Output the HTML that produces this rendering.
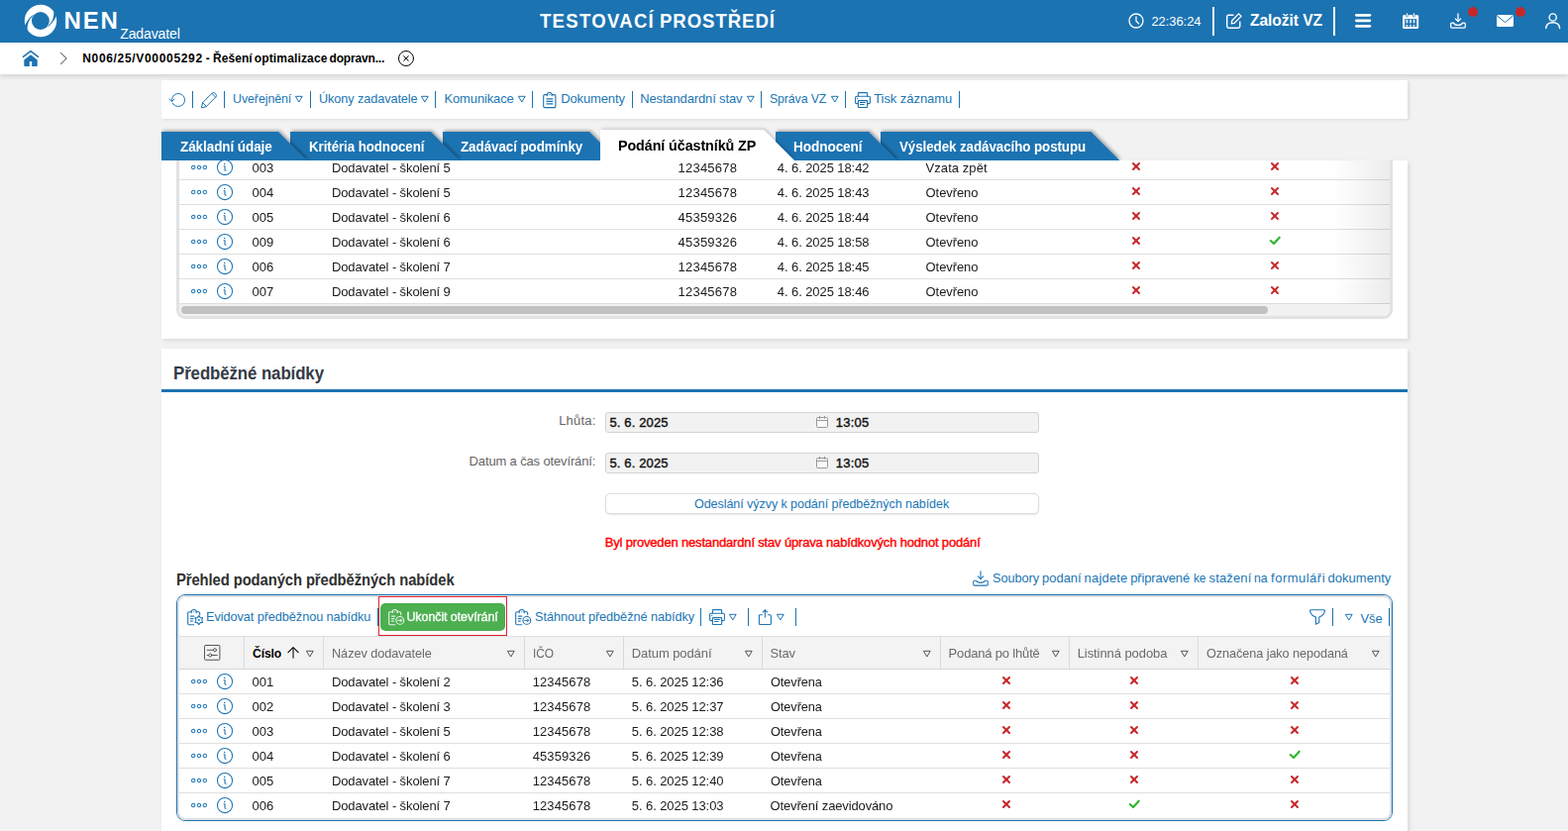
<!DOCTYPE html>
<html lang="cs">
<head>
<meta charset="utf-8">
<title>NEN - Zadavatel</title>
<style>
html,body{margin:0;padding:0}
body{width:1583px;height:839px;overflow:hidden;position:relative;background:#f2f2f2;font-family:"Liberation Sans",sans-serif;font-size:13px;color:#000}
.t{position:absolute;white-space:pre;line-height:20px;height:20px}
.a{position:absolute}
svg{position:absolute;overflow:visible}
.gl{position:absolute;will-change:transform}
.gi{position:absolute;width:0;height:0}

</style>
</head>
<body>
<div class="a" style="left:0px;top:0px;width:1583px;height:43px;background:#1c73b2"></div>
<svg style="left:24px;top:3.9px" width="34" height="34" viewBox="-17 -17 34 34"><circle cx="0" cy="0" r="16.2" fill="#fff"/><circle cx="-0.1" cy="0" r="8.95" fill="#1c73b2"/><path d="M-17.2,6.6 L-16.1,5.2 C-14.9,2.2 -11.8,-3.0 -7.7,-6.0 L-7.3,-5.3 C-10.8,-2.3 -13.6,1.8 -13.3,9.2 L-14.2,10.5 Z" fill="#1c73b2"/><path d="M-17.2,6.6 L-16.1,5.2 C-14.9,2.2 -11.8,-3.0 -7.7,-6.0 L-7.3,-5.3 C-10.8,-2.3 -13.6,1.8 -13.3,9.2 L-14.2,10.5 Z" fill="#1c73b2" transform="rotate(180)"/></svg>
<span class="t" style="left:64.48px;top:10.5px;font-size:24px;font-weight:700;color:#fff;letter-spacing:1.894px;">NEN</span>
<span class="t" style="left:121.23px;top:23.5px;font-size:14px;color:#fff;letter-spacing:-0.116px;">Zadavatel</span>
<span class="t" style="left:544.78px;top:11px;font-size:20px;font-weight:700;transform:scaleX(0.93);transform-origin:0 50%;color:#fff;letter-spacing:1.35px;">TESTOVACÍ </span>
<span class="t" style="left:665.78px;top:11px;font-size:20px;font-weight:700;transform:scaleX(0.93);transform-origin:0 50%;color:#fff;letter-spacing:1.002px;">PROSTŘEDÍ</span>
<svg style="left:1137.7px;top:11.9px" width="18" height="18" viewBox="-9 -9 18 18"><circle cx="0" cy="0" r="7" fill="none" stroke="#fff" stroke-width="1.3" stroke-linecap="round" stroke-linejoin="round" /><path d="M0,-4 V0.2 L2.6,2.8" fill="none" stroke="#fff" stroke-width="1.3" stroke-linecap="round" stroke-linejoin="round" /></svg>
<span class="t" style="left:1162.38px;top:12px;font-size:13px;color:#fff;letter-spacing:-0.063px;">22:36:24</span>
<div class="a" style="left:1224px;top:7px;width:2px;height:29px;background:#fff"></div>
<svg style="left:1238.2px;top:13px" width="16" height="16" viewBox="0 0 16 16"><path d="M7,2.2 H2.4 Q0.7,2.2 0.7,3.9 V13.6 Q0.7,15.3 2.4,15.3 H12.1 Q13.8,15.3 13.8,13.6 V9" fill="none" stroke="#fff" stroke-width="1.4" stroke-linecap="round" stroke-linejoin="round" /><path d="M12.6,0.9 L15.1,3.4 L8.2,10.3 L5.3,10.8 L5.8,7.8 Z" fill="none" stroke="#fff" stroke-width="1.3" stroke-linecap="round" stroke-linejoin="round" /></svg>
<span class="t" style="left:1261.64px;top:10.6px;font-size:16px;font-weight:700;transform:scaleX(0.9759);transform-origin:0 50%;color:#fff;letter-spacing:-0.084px;">Založit VZ</span>
<div class="a" style="left:1346px;top:7px;width:2px;height:29px;background:#fff"></div>
<svg style="left:1368px;top:14.2px" width="16.2" height="14" viewBox="0 0 16.2 14"><rect x="0" y="0" width="16.2" height="2.7" rx="1.35" fill="#fff"/><rect x="0" y="5.5" width="16.2" height="2.7" rx="1.35" fill="#fff"/><rect x="0" y="11" width="16.2" height="2.7" rx="1.35" fill="#fff"/></svg>
<svg style="left:1415.7px;top:13.1px" width="16.2" height="16" viewBox="0 0 16.2 16"><rect x="0" y="2" width="16.2" height="14" rx="1.6" fill="#fff"/><rect x="3.5" y="0" width="1.9" height="4" rx="0.9" fill="#fff" stroke="#1c73b2" stroke-width="0.7"/><rect x="10.5" y="0" width="1.9" height="4" rx="0.9" fill="#fff" stroke="#1c73b2" stroke-width="0.7"/><rect x="2.2" y="6.1" width="12" height="8" fill="#1c73b2"/><rect x="3.5" y="6.8" width="1.9" height="3.6" fill="#fff" opacity=".8"/><rect x="3.5" y="12" width="1.9" height="1.7" fill="#fff" opacity=".85"/><rect x="7.1" y="6.8" width="1.9" height="3.6" fill="#fff" opacity=".8"/><rect x="7.1" y="12" width="1.9" height="1.7" fill="#fff" opacity=".85"/><rect x="10.6" y="6.8" width="1.9" height="3.6" fill="#fff" opacity=".8"/><rect x="10.6" y="12" width="1.9" height="1.7" fill="#fff" opacity=".85"/></svg>
<svg style="left:1463.8px;top:13px" width="16" height="16" viewBox="0 0 16 16"><path d="M8,0.8 V8.4" fill="none" stroke="#fff" stroke-width="1.3" stroke-linecap="round" stroke-linejoin="round" /><path d="M5.3,5.9 L8,8.6 L10.7,5.9" fill="none" stroke="#fff" stroke-width="1.3" stroke-linecap="round" stroke-linejoin="round" /><path d="M1.8,10.2 Q0.7,10.2 0.7,11.3 V14 Q0.7,15.1 1.8,15.1 H14.2 Q15.3,15.1 15.3,14 V11.3 Q15.3,10.2 14.2,10.2 H12.3 Q11.6,12.4 8,12.4 Q4.4,12.4 3.7,10.2 Z" fill="none" stroke="#fff" stroke-width="1.3" stroke-linecap="round" stroke-linejoin="round" /></svg>
<div class="a" style="left:1482px;top:6.9px;width:10px;height:10px;border-radius:50%;background:#c62828"></div>
<svg style="left:1511px;top:15px" width="17" height="12" viewBox="0 0 17 12"><rect x="0" y="0" width="17" height="12" rx="1.6" fill="#fff"/><path d="M0.8,1.2 L8.5,7.6 L16.2,1.2" fill="none" stroke="#1c73b2" stroke-width="1" stroke-linecap="round" stroke-linejoin="round" /></svg>
<div class="a" style="left:1530px;top:6.9px;width:10px;height:10px;border-radius:50%;background:#c62828"></div>
<svg style="left:1560px;top:13px" width="15.4" height="16" viewBox="0 0 15.4 16"><circle cx="7.7" cy="4.5" r="3.6" fill="none" stroke="#fff" stroke-width="1.4" stroke-linecap="round" stroke-linejoin="round" /><path d="M0.8,15.6 Q1,9.7 7.7,9.7 Q14.4,9.7 14.6,15.6" fill="none" stroke="#fff" stroke-width="1.4" stroke-linecap="round" stroke-linejoin="round" /></svg>
<div class="a" style="left:0px;top:43px;width:1583px;height:32px;background:#fff;box-shadow:0 2px 5px rgba(0,0,0,.14)"></div>
<svg style="left:23.2px;top:50.9px" width="16" height="16" viewBox="0 0 16 16"><path d="M0.4,6.4 L8,0.6 L15.6,6.4" fill="none" stroke="#1c73b2" stroke-width="1.5" stroke-linecap="round" stroke-linejoin="round" /><path d="M8,4.2 L14.7,9.5 V15.2 Q14.7,16 13.9,16 H9.2 V11 H6.8 V16 H2.1 Q1.3,16 1.3,15.2 V9.5 Z" fill="#1c73b2"/></svg>
<svg style="left:60.5px;top:53.1px" width="7" height="12" viewBox="0 0 7 12"><path d="M0.5,0.3 L6.2,6 L0.5,11.7" fill="none" stroke="#444" stroke-width="1" stroke-linecap="round" stroke-linejoin="round" /></svg>
<span class="t" style="left:83.24px;top:49px;font-size:12px;font-weight:700;letter-spacing:0.673px;">N006/25/V00005292 </span>
<span class="t" style="left:207.84px;top:49px;font-size:12px;font-weight:700;">- </span>
<span class="t" style="left:215.04px;top:49px;font-size:12px;font-weight:700;letter-spacing:0.064px;">Řešení </span>
<span class="t" style="left:256.74px;top:49px;font-size:12px;font-weight:700;letter-spacing:0.15px;">optimalizace </span>
<span class="t" style="left:332.54px;top:49px;font-size:12px;font-weight:700;letter-spacing:-0.174px;">dopravn...</span>
<svg style="left:400.5px;top:50px" width="18" height="18" viewBox="-9 -9 18 18"><circle cx="0" cy="0" r="7.5" fill="none" stroke="#000" stroke-width="1" stroke-linecap="round" stroke-linejoin="round" /><path d="M-2.3,-2.3 L2.3,2.3" fill="none" stroke="#000" stroke-width="1" stroke-linecap="round" stroke-linejoin="round" /><path d="M2.3,-2.3 L-2.3,2.3" fill="none" stroke="#000" stroke-width="1" stroke-linecap="round" stroke-linejoin="round" /></svg>
<div class="a" style="left:163px;top:81px;width:1258px;height:39px;background:#fff;box-shadow:2px 1px 3px rgba(0,0,0,.09)"></div>
<svg style="left:171px;top:92px" width="18" height="18" viewBox="-9 -9 18 18"><path d="M-6.49,0.34 A6.5,6.5 0 1 1 -5.74,3.05" fill="none" stroke="#1c73b2" stroke-width="1" stroke-linecap="round" stroke-linejoin="round" /><path d="M-8.8,-1.0 L-6.5,1.6 L-4.1,-0.9" fill="none" stroke="#1c73b2" stroke-width="1" stroke-linecap="round" stroke-linejoin="round" /></svg>
<div class="a" style="left:194px;top:92px;width:1px;height:17px;background:#1c73b2"></div>
<svg style="left:203.2px;top:93.1px" width="16" height="16" viewBox="0 0 16 16"><path d="M0.5,15.5 L1.6,10.6 L11.3,0.9 Q12.6,-0.2 14.1,1.2 L14.8,1.9 Q16.1,3.4 15.1,4.7 L5.4,14.4 Z" fill="none" stroke="#1c73b2" stroke-width="1" stroke-linecap="round" stroke-linejoin="round" /><path d="M1.6,10.6 L5.4,14.4" fill="none" stroke="#1c73b2" stroke-width="1" stroke-linecap="round" stroke-linejoin="round" /><path d="M10.9,1.4 L14.6,5.1" fill="none" stroke="#1c73b2" stroke-width="1" stroke-linecap="round" stroke-linejoin="round" /></svg>
<div class="a" style="left:226px;top:92px;width:1px;height:17px;background:#1c73b2"></div>
<span class="t" style="left:234.52px;top:90.3px;font-size:13px;transform:scaleX(0.9552);transform-origin:0 50%;color:#2176b5;letter-spacing:-0.086px;">Uveřejnění</span>
<svg style="left:296.8px;top:95px" width="10" height="10" viewBox="-5 -5 10 10"><path d="M-3.2,-2.7 H3.2 L0,2.7 Z" fill="none" stroke="#1c73b2" stroke-width="1" stroke-linecap="round" stroke-linejoin="round" /></svg>
<div class="a" style="left:313px;top:92px;width:1px;height:17px;background:#1c73b2"></div>
<span class="t" style="left:321.6px;top:90.3px;font-size:13px;transform:scaleX(0.9758);transform-origin:0 50%;color:#2176b5;letter-spacing:-0.082px;">Úkony zadavatele</span>
<svg style="left:423.8px;top:95px" width="10" height="10" viewBox="-5 -5 10 10"><path d="M-3.2,-2.7 H3.2 L0,2.7 Z" fill="none" stroke="#1c73b2" stroke-width="1" stroke-linecap="round" stroke-linejoin="round" /></svg>
<div class="a" style="left:439px;top:92px;width:1px;height:17px;background:#1c73b2"></div>
<span class="t" style="left:448.49px;top:90.3px;font-size:13px;color:#2176b5;letter-spacing:-0.142px;">Komunikace</span>
<svg style="left:521.8px;top:95px" width="10" height="10" viewBox="-5 -5 10 10"><path d="M-3.2,-2.7 H3.2 L0,2.7 Z" fill="none" stroke="#1c73b2" stroke-width="1" stroke-linecap="round" stroke-linejoin="round" /></svg>
<div class="a" style="left:537px;top:92px;width:1px;height:17px;background:#1c73b2"></div>
<svg style="left:547.8px;top:93px" width="14" height="16" viewBox="0 0 14 16"><path d="M4.4,2.6 H2 Q0.7,2.6 0.7,3.9 V14.3 Q0.7,15.6 2,15.6 H11.6 Q12.9,15.6 12.9,14.3 V3.9 Q12.9,2.6 11.6,2.6 H9.2" fill="none" stroke="#1c73b2" stroke-width="1.1" stroke-linecap="round" stroke-linejoin="round" /><path d="M4.4,3.6 V2.6 Q4.4,0.5 6.8,0.5 Q9.2,0.5 9.2,2.6 V3.6" fill="none" stroke="#1c73b2" stroke-width="1.1" stroke-linecap="round" stroke-linejoin="round" /><circle cx="6.8" cy="2.6" r="0.6" fill="#1c73b2"/><path d="M3.9,6.9 H9.9" fill="none" stroke="#1c73b2" stroke-width="1.1" stroke-linecap="round" stroke-linejoin="round" /><path d="M3.9,9.4 H9.9" fill="none" stroke="#1c73b2" stroke-width="1.1" stroke-linecap="round" stroke-linejoin="round" /><path d="M3.9,11.9 H9.9" fill="none" stroke="#1c73b2" stroke-width="1.1" stroke-linecap="round" stroke-linejoin="round" /></svg>
<span class="t" style="left:566.18px;top:90.3px;font-size:13px;color:#2176b5;letter-spacing:-0.123px;">Dokumenty</span>
<div class="a" style="left:638px;top:92px;width:1px;height:17px;background:#1c73b2"></div>
<span class="t" style="left:646.18px;top:90.3px;font-size:13px;color:#2176b5;letter-spacing:-0.134px;">Nestandardní stav</span>
<svg style="left:752.6px;top:95px" width="10" height="10" viewBox="-5 -5 10 10"><path d="M-3.2,-2.7 H3.2 L0,2.7 Z" fill="none" stroke="#1c73b2" stroke-width="1" stroke-linecap="round" stroke-linejoin="round" /></svg>
<div class="a" style="left:768px;top:92px;width:1px;height:17px;background:#1c73b2"></div>
<span class="t" style="left:777.13px;top:90.3px;font-size:13px;transform:scaleX(0.9439);transform-origin:0 50%;color:#2176b5;letter-spacing:-0.089px;">Správa VZ</span>
<svg style="left:837.5px;top:95px" width="10" height="10" viewBox="-5 -5 10 10"><path d="M-3.2,-2.7 H3.2 L0,2.7 Z" fill="none" stroke="#1c73b2" stroke-width="1" stroke-linecap="round" stroke-linejoin="round" /></svg>
<div class="a" style="left:853px;top:92px;width:1px;height:17px;background:#1c73b2"></div>
<svg style="left:862.8px;top:93px" width="16" height="16" viewBox="0 0 16 16"><path d="M3.4,4.3 V1.2 Q3.4,0.6 4,0.6 H12 Q12.6,0.6 12.6,1.2 V4.3" fill="none" stroke="#1c73b2" stroke-width="1.1" stroke-linecap="round" stroke-linejoin="round" /><path d="M3.4,11.6 H1.8 Q0.6,11.6 0.6,10.4 V5.5 Q0.6,4.3 1.8,4.3 H14.2 Q15.4,4.3 15.4,5.5 V10.4 Q15.4,11.6 14.2,11.6 H12.6" fill="none" stroke="#1c73b2" stroke-width="1.1" stroke-linecap="round" stroke-linejoin="round" /><rect x="3.4" y="8.6" width="9.2" height="6.9" rx="0.5" fill="none" stroke="#1c73b2" stroke-width="1.1" stroke-linecap="round" stroke-linejoin="round" /><path d="M5.4,10.5 H10.4" fill="none" stroke="#1c73b2" stroke-width="1" stroke-linecap="round" stroke-linejoin="round" /><path d="M5.4,12.5 H9.2" fill="none" stroke="#1c73b2" stroke-width="1" stroke-linecap="round" stroke-linejoin="round" /><circle cx="2.7" cy="6.4" r="0.6" fill="#1c73b2"/></svg>
<span class="t" style="left:882.18px;top:90.3px;font-size:13px;color:#2176b5;letter-spacing:-0.059px;">Tisk záznamu</span>
<div class="a" style="left:968px;top:92px;width:1px;height:17px;background:#1c73b2"></div>
<div class="a" style="left:163px;top:162px;width:1258px;height:180px;background:#fff;box-shadow:2px 2px 4px rgba(0,0,0,.10)"></div>
<div class="a" style="left:178px;top:162px;width:1228px;height:160px;box-sizing:border-box;border:3px solid #e0e2e4;border-top:0;border-radius:0 0 9px 9px;background:#fff"></div>
<div class="gl" style="left:181px;top:162px;width:1222px;height:145px"><div class="gi" style="left:-181px;top:-162px">
<div class="a" style="left:181px;top:181px;width:1222px;height:1px;background:#dfdfdf"></div>
<svg style="left:192.1px;top:166px" width="18" height="6" viewBox="-9 -3 18 6"><circle cx="-5.8" cy="0" r="1.7" fill="none" stroke="#1c73b2" stroke-width="1.05" stroke-linecap="round" stroke-linejoin="round" /><circle cx="0" cy="0" r="1.7" fill="none" stroke="#1c73b2" stroke-width="1.05" stroke-linecap="round" stroke-linejoin="round" /><circle cx="5.8" cy="0" r="1.7" fill="none" stroke="#1c73b2" stroke-width="1.05" stroke-linecap="round" stroke-linejoin="round" /></svg>
<svg style="left:218px;top:160px" width="18" height="18" viewBox="-9 -9 18 18"><circle cx="0" cy="0" r="7.6" fill="none" stroke="#1c73b2" stroke-width="1.05" stroke-linecap="round" stroke-linejoin="round" /><circle cx="-0.3" cy="-3.5" r="0.8" fill="#1c73b2"/><path d="M-0.9,-1.3 H0 V2.6 Q0,3.3 1,3.3" fill="none" stroke="#1c73b2" stroke-width="1.1" stroke-linecap="round" stroke-linejoin="round" /></svg>
<span class="t" style="left:254.59px;top:159.5px;font-size:13px;color:#1b1b1b;letter-spacing:-0.067px;">003</span>
<span class="t" style="left:334.89px;top:159.5px;font-size:13px;color:#1b1b1b;letter-spacing:-0.113px;">Dodavatel - školení 5</span>
<span class="t" style="left:684.58px;top:159.5px;font-size:13px;color:#1b1b1b;letter-spacing:0.218px;">12345678</span>
<span class="t" style="left:784.78px;top:159.5px;font-size:13px;color:#1b1b1b;letter-spacing:-0.081px;">4. 6. 2025 18:42</span>
<span class="t" style="left:934.58px;top:159.5px;font-size:13px;color:#1b1b1b;letter-spacing:0.059px;">Vzata zpět</span>
<svg style="left:1142.4px;top:163px" width="10" height="10" viewBox="-5 -5 10 10"><line x1="-3" y1="-3" x2="3" y2="3" stroke="#c8272b" stroke-width="2" stroke-linecap="round"/><line x1="3" y1="-3" x2="-3" y2="3" stroke="#c8272b" stroke-width="2" stroke-linecap="round"/></svg>
<svg style="left:1282.4px;top:163px" width="10" height="10" viewBox="-5 -5 10 10"><line x1="-3" y1="-3" x2="3" y2="3" stroke="#c8272b" stroke-width="2" stroke-linecap="round"/><line x1="3" y1="-3" x2="-3" y2="3" stroke="#c8272b" stroke-width="2" stroke-linecap="round"/></svg>
<div class="a" style="left:181px;top:206px;width:1222px;height:1px;background:#dfdfdf"></div>
<svg style="left:192.1px;top:191px" width="18" height="6" viewBox="-9 -3 18 6"><circle cx="-5.8" cy="0" r="1.7" fill="none" stroke="#1c73b2" stroke-width="1.05" stroke-linecap="round" stroke-linejoin="round" /><circle cx="0" cy="0" r="1.7" fill="none" stroke="#1c73b2" stroke-width="1.05" stroke-linecap="round" stroke-linejoin="round" /><circle cx="5.8" cy="0" r="1.7" fill="none" stroke="#1c73b2" stroke-width="1.05" stroke-linecap="round" stroke-linejoin="round" /></svg>
<svg style="left:218px;top:185px" width="18" height="18" viewBox="-9 -9 18 18"><circle cx="0" cy="0" r="7.6" fill="none" stroke="#1c73b2" stroke-width="1.05" stroke-linecap="round" stroke-linejoin="round" /><circle cx="-0.3" cy="-3.5" r="0.8" fill="#1c73b2"/><path d="M-0.9,-1.3 H0 V2.6 Q0,3.3 1,3.3" fill="none" stroke="#1c73b2" stroke-width="1.1" stroke-linecap="round" stroke-linejoin="round" /></svg>
<span class="t" style="left:254.59px;top:184.5px;font-size:13px;color:#1b1b1b;letter-spacing:-0.067px;">004</span>
<span class="t" style="left:334.89px;top:184.5px;font-size:13px;color:#1b1b1b;letter-spacing:-0.113px;">Dodavatel - školení 5</span>
<span class="t" style="left:684.58px;top:184.5px;font-size:13px;color:#1b1b1b;letter-spacing:0.218px;">12345678</span>
<span class="t" style="left:784.78px;top:184.5px;font-size:13px;color:#1b1b1b;letter-spacing:-0.081px;">4. 6. 2025 18:43</span>
<span class="t" style="left:934.58px;top:184.5px;font-size:13px;color:#1b1b1b;letter-spacing:-0.088px;">Otevřeno</span>
<svg style="left:1142.4px;top:188px" width="10" height="10" viewBox="-5 -5 10 10"><line x1="-3" y1="-3" x2="3" y2="3" stroke="#c8272b" stroke-width="2" stroke-linecap="round"/><line x1="3" y1="-3" x2="-3" y2="3" stroke="#c8272b" stroke-width="2" stroke-linecap="round"/></svg>
<svg style="left:1282.4px;top:188px" width="10" height="10" viewBox="-5 -5 10 10"><line x1="-3" y1="-3" x2="3" y2="3" stroke="#c8272b" stroke-width="2" stroke-linecap="round"/><line x1="3" y1="-3" x2="-3" y2="3" stroke="#c8272b" stroke-width="2" stroke-linecap="round"/></svg>
<div class="a" style="left:181px;top:231px;width:1222px;height:1px;background:#dfdfdf"></div>
<svg style="left:192.1px;top:216px" width="18" height="6" viewBox="-9 -3 18 6"><circle cx="-5.8" cy="0" r="1.7" fill="none" stroke="#1c73b2" stroke-width="1.05" stroke-linecap="round" stroke-linejoin="round" /><circle cx="0" cy="0" r="1.7" fill="none" stroke="#1c73b2" stroke-width="1.05" stroke-linecap="round" stroke-linejoin="round" /><circle cx="5.8" cy="0" r="1.7" fill="none" stroke="#1c73b2" stroke-width="1.05" stroke-linecap="round" stroke-linejoin="round" /></svg>
<svg style="left:218px;top:210px" width="18" height="18" viewBox="-9 -9 18 18"><circle cx="0" cy="0" r="7.6" fill="none" stroke="#1c73b2" stroke-width="1.05" stroke-linecap="round" stroke-linejoin="round" /><circle cx="-0.3" cy="-3.5" r="0.8" fill="#1c73b2"/><path d="M-0.9,-1.3 H0 V2.6 Q0,3.3 1,3.3" fill="none" stroke="#1c73b2" stroke-width="1.1" stroke-linecap="round" stroke-linejoin="round" /></svg>
<span class="t" style="left:254.59px;top:209.5px;font-size:13px;color:#1b1b1b;letter-spacing:-0.067px;">005</span>
<span class="t" style="left:334.89px;top:209.5px;font-size:13px;color:#1b1b1b;letter-spacing:-0.113px;">Dodavatel - školení 6</span>
<span class="t" style="left:684.58px;top:209.5px;font-size:13px;color:#1b1b1b;letter-spacing:0.218px;">45359326</span>
<span class="t" style="left:784.78px;top:209.5px;font-size:13px;color:#1b1b1b;letter-spacing:-0.081px;">4. 6. 2025 18:44</span>
<span class="t" style="left:934.58px;top:209.5px;font-size:13px;color:#1b1b1b;letter-spacing:-0.088px;">Otevřeno</span>
<svg style="left:1142.4px;top:213px" width="10" height="10" viewBox="-5 -5 10 10"><line x1="-3" y1="-3" x2="3" y2="3" stroke="#c8272b" stroke-width="2" stroke-linecap="round"/><line x1="3" y1="-3" x2="-3" y2="3" stroke="#c8272b" stroke-width="2" stroke-linecap="round"/></svg>
<svg style="left:1282.4px;top:213px" width="10" height="10" viewBox="-5 -5 10 10"><line x1="-3" y1="-3" x2="3" y2="3" stroke="#c8272b" stroke-width="2" stroke-linecap="round"/><line x1="3" y1="-3" x2="-3" y2="3" stroke="#c8272b" stroke-width="2" stroke-linecap="round"/></svg>
<div class="a" style="left:181px;top:256px;width:1222px;height:1px;background:#dfdfdf"></div>
<svg style="left:192.1px;top:241px" width="18" height="6" viewBox="-9 -3 18 6"><circle cx="-5.8" cy="0" r="1.7" fill="none" stroke="#1c73b2" stroke-width="1.05" stroke-linecap="round" stroke-linejoin="round" /><circle cx="0" cy="0" r="1.7" fill="none" stroke="#1c73b2" stroke-width="1.05" stroke-linecap="round" stroke-linejoin="round" /><circle cx="5.8" cy="0" r="1.7" fill="none" stroke="#1c73b2" stroke-width="1.05" stroke-linecap="round" stroke-linejoin="round" /></svg>
<svg style="left:218px;top:235px" width="18" height="18" viewBox="-9 -9 18 18"><circle cx="0" cy="0" r="7.6" fill="none" stroke="#1c73b2" stroke-width="1.05" stroke-linecap="round" stroke-linejoin="round" /><circle cx="-0.3" cy="-3.5" r="0.8" fill="#1c73b2"/><path d="M-0.9,-1.3 H0 V2.6 Q0,3.3 1,3.3" fill="none" stroke="#1c73b2" stroke-width="1.1" stroke-linecap="round" stroke-linejoin="round" /></svg>
<span class="t" style="left:254.59px;top:234.5px;font-size:13px;color:#1b1b1b;letter-spacing:-0.067px;">009</span>
<span class="t" style="left:334.89px;top:234.5px;font-size:13px;color:#1b1b1b;letter-spacing:-0.113px;">Dodavatel - školení 6</span>
<span class="t" style="left:684.58px;top:234.5px;font-size:13px;color:#1b1b1b;letter-spacing:0.218px;">45359326</span>
<span class="t" style="left:784.78px;top:234.5px;font-size:13px;color:#1b1b1b;letter-spacing:-0.081px;">4. 6. 2025 18:58</span>
<span class="t" style="left:934.58px;top:234.5px;font-size:13px;color:#1b1b1b;letter-spacing:-0.088px;">Otevřeno</span>
<svg style="left:1142.4px;top:238px" width="10" height="10" viewBox="-5 -5 10 10"><line x1="-3" y1="-3" x2="3" y2="3" stroke="#c8272b" stroke-width="2" stroke-linecap="round"/><line x1="3" y1="-3" x2="-3" y2="3" stroke="#c8272b" stroke-width="2" stroke-linecap="round"/></svg>
<svg style="left:1281.4px;top:237px" width="12" height="12" viewBox="-6 -6 12 12"><path d="M-4.2,0.0 L-1.0,3.0 L4.7,-3.3" fill="none" stroke="#2db52d" stroke-width="2.1" stroke-linecap="round" stroke-linejoin="round" /></svg>
<div class="a" style="left:181px;top:281px;width:1222px;height:1px;background:#dfdfdf"></div>
<svg style="left:192.1px;top:266px" width="18" height="6" viewBox="-9 -3 18 6"><circle cx="-5.8" cy="0" r="1.7" fill="none" stroke="#1c73b2" stroke-width="1.05" stroke-linecap="round" stroke-linejoin="round" /><circle cx="0" cy="0" r="1.7" fill="none" stroke="#1c73b2" stroke-width="1.05" stroke-linecap="round" stroke-linejoin="round" /><circle cx="5.8" cy="0" r="1.7" fill="none" stroke="#1c73b2" stroke-width="1.05" stroke-linecap="round" stroke-linejoin="round" /></svg>
<svg style="left:218px;top:260px" width="18" height="18" viewBox="-9 -9 18 18"><circle cx="0" cy="0" r="7.6" fill="none" stroke="#1c73b2" stroke-width="1.05" stroke-linecap="round" stroke-linejoin="round" /><circle cx="-0.3" cy="-3.5" r="0.8" fill="#1c73b2"/><path d="M-0.9,-1.3 H0 V2.6 Q0,3.3 1,3.3" fill="none" stroke="#1c73b2" stroke-width="1.1" stroke-linecap="round" stroke-linejoin="round" /></svg>
<span class="t" style="left:254.59px;top:259.5px;font-size:13px;color:#1b1b1b;letter-spacing:-0.067px;">006</span>
<span class="t" style="left:334.89px;top:259.5px;font-size:13px;color:#1b1b1b;letter-spacing:-0.113px;">Dodavatel - školení 7</span>
<span class="t" style="left:684.58px;top:259.5px;font-size:13px;color:#1b1b1b;letter-spacing:0.218px;">12345678</span>
<span class="t" style="left:784.78px;top:259.5px;font-size:13px;color:#1b1b1b;letter-spacing:-0.081px;">4. 6. 2025 18:45</span>
<span class="t" style="left:934.58px;top:259.5px;font-size:13px;color:#1b1b1b;letter-spacing:-0.088px;">Otevřeno</span>
<svg style="left:1142.4px;top:263px" width="10" height="10" viewBox="-5 -5 10 10"><line x1="-3" y1="-3" x2="3" y2="3" stroke="#c8272b" stroke-width="2" stroke-linecap="round"/><line x1="3" y1="-3" x2="-3" y2="3" stroke="#c8272b" stroke-width="2" stroke-linecap="round"/></svg>
<svg style="left:1282.4px;top:263px" width="10" height="10" viewBox="-5 -5 10 10"><line x1="-3" y1="-3" x2="3" y2="3" stroke="#c8272b" stroke-width="2" stroke-linecap="round"/><line x1="3" y1="-3" x2="-3" y2="3" stroke="#c8272b" stroke-width="2" stroke-linecap="round"/></svg>
<div class="a" style="left:181px;top:306px;width:1222px;height:1px;background:#dfdfdf"></div>
<svg style="left:192.1px;top:291px" width="18" height="6" viewBox="-9 -3 18 6"><circle cx="-5.8" cy="0" r="1.7" fill="none" stroke="#1c73b2" stroke-width="1.05" stroke-linecap="round" stroke-linejoin="round" /><circle cx="0" cy="0" r="1.7" fill="none" stroke="#1c73b2" stroke-width="1.05" stroke-linecap="round" stroke-linejoin="round" /><circle cx="5.8" cy="0" r="1.7" fill="none" stroke="#1c73b2" stroke-width="1.05" stroke-linecap="round" stroke-linejoin="round" /></svg>
<svg style="left:218px;top:285px" width="18" height="18" viewBox="-9 -9 18 18"><circle cx="0" cy="0" r="7.6" fill="none" stroke="#1c73b2" stroke-width="1.05" stroke-linecap="round" stroke-linejoin="round" /><circle cx="-0.3" cy="-3.5" r="0.8" fill="#1c73b2"/><path d="M-0.9,-1.3 H0 V2.6 Q0,3.3 1,3.3" fill="none" stroke="#1c73b2" stroke-width="1.1" stroke-linecap="round" stroke-linejoin="round" /></svg>
<span class="t" style="left:254.59px;top:284.5px;font-size:13px;color:#1b1b1b;letter-spacing:-0.067px;">007</span>
<span class="t" style="left:334.89px;top:284.5px;font-size:13px;color:#1b1b1b;letter-spacing:-0.113px;">Dodavatel - školení 9</span>
<span class="t" style="left:684.58px;top:284.5px;font-size:13px;color:#1b1b1b;letter-spacing:0.218px;">12345678</span>
<span class="t" style="left:784.78px;top:284.5px;font-size:13px;color:#1b1b1b;letter-spacing:-0.081px;">4. 6. 2025 18:46</span>
<span class="t" style="left:934.58px;top:284.5px;font-size:13px;color:#1b1b1b;letter-spacing:-0.088px;">Otevřeno</span>
<svg style="left:1142.4px;top:288px" width="10" height="10" viewBox="-5 -5 10 10"><line x1="-3" y1="-3" x2="3" y2="3" stroke="#c8272b" stroke-width="2" stroke-linecap="round"/><line x1="3" y1="-3" x2="-3" y2="3" stroke="#c8272b" stroke-width="2" stroke-linecap="round"/></svg>
<svg style="left:1282.4px;top:288px" width="10" height="10" viewBox="-5 -5 10 10"><line x1="-3" y1="-3" x2="3" y2="3" stroke="#c8272b" stroke-width="2" stroke-linecap="round"/><line x1="3" y1="-3" x2="-3" y2="3" stroke="#c8272b" stroke-width="2" stroke-linecap="round"/></svg>
</div></div>
<div class="a" style="left:1345px;top:162px;width:58px;height:145px;background:linear-gradient(90deg,rgba(0,0,0,0),rgba(0,0,0,.075))"></div>
<div class="a" style="left:181px;top:307px;width:1222px;height:12px;background:#f1f1f1;border-radius:0 0 6px 6px"></div>
<div class="a" style="left:183px;top:309px;width:1097px;height:8px;background:#c1c1c1;border-radius:4px"></div>
<svg style="left:0;top:120px" width="1583" height="42" viewBox="0 120 1583 42"><defs><filter id="ts" x="-5%" y="-40%" width="110%" height="180%"><feDropShadow dx="1.5" dy="-1.5" stdDeviation="1.5" flood-color="#000" flood-opacity=".30"/></filter><filter id="tw" x="-5%" y="-40%" width="110%" height="180%"><feDropShadow dx="1.5" dy="-1.5" stdDeviation="1.5" flood-color="#000" flood-opacity=".15"/></filter><clipPath id="tc"><rect x="0" y="120" width="1583" height="42"/></clipPath></defs><g clip-path="url(#tc)"><g filter="url(#ts)"><polygon points="889,133 1101.5,133 1130.5,162 889,162" fill="#1c73b2"/></g><g filter="url(#ts)"><polygon points="783,133 877,133 906,162 783,162" fill="#1c73b2"/></g><g filter="url(#ts)"><polygon points="447,133 595,133 624,162 447,162" fill="#1c73b2"/></g><g filter="url(#ts)"><polygon points="293,133 435,133 464,162 293,162" fill="#1c73b2"/></g><g filter="url(#ts)"><polygon points="163,133 281,133 310,162 163,162" fill="#1c73b2"/></g><g filter="url(#tw)"><polygon points="606,131 771,131 802,162 606,162" fill="#fff"/></g></g></svg>
<span class="t" style="left:181.56px;top:138.2px;font-size:14px;font-weight:700;transform:scaleX(0.9652);transform-origin:0 50%;color:#fff;letter-spacing:-0.084px;">Základní údaje</span>
<span class="t" style="left:311.97px;top:138.2px;font-size:14px;font-weight:700;transform:scaleX(0.952);transform-origin:0 50%;color:#fff;letter-spacing:-0.083px;">Kritéria hodnocení</span>
<span class="t" style="left:465.36px;top:138.2px;font-size:14px;font-weight:700;transform:scaleX(0.9588);transform-origin:0 50%;color:#fff;letter-spacing:-0.083px;">Zadávací podmínky</span>
<span class="t" style="left:623.91px;top:137.2px;font-size:15px;font-weight:700;transform:scaleX(0.9539);transform-origin:0 50%;letter-spacing:-0.084px;">Podání účastníků ZP</span>
<span class="t" style="left:801.35px;top:138.2px;font-size:14px;font-weight:700;transform:scaleX(0.9715);transform-origin:0 50%;color:#fff;letter-spacing:-0.085px;">Hodnocení</span>
<span class="t" style="left:907.76px;top:138.2px;font-size:14px;font-weight:700;transform:scaleX(0.9552);transform-origin:0 50%;color:#fff;letter-spacing:-0.082px;">Výsledek zadávacího postupu</span>
<div class="a" style="left:163px;top:352px;width:1258px;height:500px;background:#fff;box-shadow:2px 2px 4px rgba(0,0,0,.10)"></div>
<span class="t" style="left:174.77px;top:367px;font-size:18px;font-weight:700;transform:scaleX(0.9345);transform-origin:0 50%;color:#333a45;letter-spacing:-0.087px;">Předběžné nabídky</span>
<div class="a" style="left:163px;top:393px;width:1258px;height:3px;background:#1c73b2"></div>
<span class="t" style="left:564.18px;top:415px;font-size:13px;color:#666;letter-spacing:0.203px;">Lhůta:</span>
<div class="a" style="left:611px;top:416px;width:438px;height:21px;box-sizing:border-box;border:1px solid #d3d3d3;border-radius:3px;background:#f2f2f2"></div>
<span class="t" style="left:615.49px;top:416.7px;font-size:13px;-webkit-text-stroke:.4px;color:#111;letter-spacing:0.138px;">5. 6. 2025</span>
<svg style="left:823.5px;top:420.2px" width="12" height="12" viewBox="0 0 12 12"><rect x="0.5" y="1.5" width="11" height="10" rx="1" fill="rgba(255,255,255,.55)" stroke="#999" stroke-width="1"/><path d="M0.5,4.5 H11.5" fill="none" stroke="#999" stroke-width="1" stroke-linecap="round" stroke-linejoin="round" /><path d="M3.5,0.3 V2.5" fill="none" stroke="#999" stroke-width="1" stroke-linecap="round" stroke-linejoin="round" /><path d="M8.5,0.3 V2.5" fill="none" stroke="#999" stroke-width="1" stroke-linecap="round" stroke-linejoin="round" /></svg>
<span class="t" style="left:843.68px;top:416.7px;font-size:13px;-webkit-text-stroke:.4px;color:#111;letter-spacing:0.256px;">13:05</span>
<span class="t" style="left:473.59px;top:455.6px;font-size:13px;color:#666;letter-spacing:-0.143px;">Datum a čas otevírání:</span>
<div class="a" style="left:611px;top:457px;width:438px;height:21px;box-sizing:border-box;border:1px solid #d3d3d3;border-radius:3px;background:#f2f2f2"></div>
<span class="t" style="left:615.49px;top:457.7px;font-size:13px;-webkit-text-stroke:.4px;color:#111;letter-spacing:0.138px;">5. 6. 2025</span>
<svg style="left:823.5px;top:461.2px" width="12" height="12" viewBox="0 0 12 12"><rect x="0.5" y="1.5" width="11" height="10" rx="1" fill="rgba(255,255,255,.55)" stroke="#999" stroke-width="1"/><path d="M0.5,4.5 H11.5" fill="none" stroke="#999" stroke-width="1" stroke-linecap="round" stroke-linejoin="round" /><path d="M3.5,0.3 V2.5" fill="none" stroke="#999" stroke-width="1" stroke-linecap="round" stroke-linejoin="round" /><path d="M8.5,0.3 V2.5" fill="none" stroke="#999" stroke-width="1" stroke-linecap="round" stroke-linejoin="round" /></svg>
<span class="t" style="left:843.68px;top:457.7px;font-size:13px;-webkit-text-stroke:.4px;color:#111;letter-spacing:0.256px;">13:05</span>
<div class="a" style="left:611px;top:498px;width:438px;height:21px;box-sizing:border-box;border:1px solid #dcdcdc;border-radius:5px;background:#fff;box-shadow:0 1px 2px rgba(0,0,0,.10)"></div>
<span class="t" style="left:701.31px;top:498.6px;font-size:13px;transform:scaleX(0.9664);transform-origin:0 50%;color:#2176b5;letter-spacing:-0.081px;">Odeslání výzvy k podání předběžných nabídek</span>
<span class="t" style="left:610.68px;top:537.6px;font-size:13px;-webkit-text-stroke:.4px;color:#ff0000;letter-spacing:-0.169px;">Byl proveden nestandardní stav úprava nabídkových hodnot podání</span>
<span class="t" style="left:177.99px;top:575.5px;font-size:16px;font-weight:700;transform:scaleX(0.9237);transform-origin:0 50%;color:#2f2f2f;letter-spacing:-0.084px;">Přehled podaných předběžných nabídek</span>
<svg style="left:982.2px;top:575.8px" width="16" height="16" viewBox="0 0 16 16"><path d="M8,0.8 V8.4" fill="none" stroke="#2176b5" stroke-width="1.1" stroke-linecap="round" stroke-linejoin="round" /><path d="M5.3,5.9 L8,8.6 L10.7,5.9" fill="none" stroke="#2176b5" stroke-width="1.1" stroke-linecap="round" stroke-linejoin="round" /><path d="M1.8,10.2 Q0.7,10.2 0.7,11.3 V14 Q0.7,15.1 1.8,15.1 H14.2 Q15.3,15.1 15.3,14 V11.3 Q15.3,10.2 14.2,10.2 H12.3 Q11.6,12.4 8,12.4 Q4.4,12.4 3.7,10.2 Z" fill="none" stroke="#2176b5" stroke-width="1.1" stroke-linecap="round" stroke-linejoin="round" /></svg>
<span class="t" style="left:1001.5px;top:573.6px;font-size:13px;transform:scaleX(0.9818);transform-origin:0 50%;color:#2176b5;letter-spacing:-0.084px;">Soubory </span>
<span class="t" style="left:1052.09px;top:573.6px;font-size:13px;color:#2176b5;letter-spacing:-0.039px;">podaní </span>
<span class="t" style="left:1094.59px;top:573.6px;font-size:13px;color:#2176b5;letter-spacing:0.186px;">najdete </span>
<span class="t" style="left:1141.29px;top:573.6px;font-size:13px;color:#2176b5;letter-spacing:-0.174px;">připravené </span>
<span class="t" style="left:1204.94px;top:573.6px;font-size:13px;transform:scaleX(0.9206);transform-origin:0 50%;color:#2176b5;letter-spacing:-0.181px;">ke </span>
<span class="t" style="left:1220.49px;top:573.6px;font-size:13px;color:#2176b5;letter-spacing:0.158px;">stažení </span>
<span class="t" style="left:1266.42px;top:573.6px;font-size:13px;transform:scaleX(0.95);transform-origin:0 50%;color:#2176b5;letter-spacing:-0.141px;">na </span>
<span class="t" style="left:1283.09px;top:573.6px;font-size:13px;color:#2176b5;letter-spacing:0.486px;">formuláři </span>
<span class="t" style="left:1340.59px;top:573.6px;font-size:13px;color:#2176b5;letter-spacing:0.01px;">dokumenty</span>
<div class="a" style="left:178px;top:600px;width:1228px;height:229px;box-sizing:border-box;border:1px solid #1c73b2;border-radius:9px;background:#fff"></div>
<div class="a" style="left:179px;top:601px;width:1226px;height:227px;box-sizing:border-box;border:2px solid #dfe0e1;border-radius:8px"></div>
<svg style="left:189px;top:614.9px" width="16" height="16" viewBox="0 0 16 16"><path d="M4.2,2.8 H1.9 Q0.7,2.8 0.7,4 V14.5 Q0.7,15.7 1.9,15.7 H6.8" fill="none" stroke="#2176b5" stroke-width="1.1" stroke-linecap="round" stroke-linejoin="round" /><path d="M9.2,2.8 H11.5 Q12.7,2.8 12.7,4 V5.7" fill="none" stroke="#2176b5" stroke-width="1.1" stroke-linecap="round" stroke-linejoin="round" /><path d="M4.2,3.7 V2.6 Q4.2,0.5 6.7,0.5 Q9.2,0.5 9.2,2.6 V3.7" fill="none" stroke="#2176b5" stroke-width="1.1" stroke-linecap="round" stroke-linejoin="round" /><circle cx="6.7" cy="2.8" r="0.55" fill="#2176b5"/><path d="M3.4,7.1 H6.9" fill="none" stroke="#2176b5" stroke-width="1.1" stroke-linecap="round" stroke-linejoin="round" /><path d="M3.4,9.6 H6" fill="none" stroke="#2176b5" stroke-width="1.1" stroke-linecap="round" stroke-linejoin="round" /><path d="M3.4,12.1 H5.4" fill="none" stroke="#2176b5" stroke-width="1.1" stroke-linecap="round" stroke-linejoin="round" /><polygon points="11.80,6.60 13.25,8.59 15.70,8.85 14.70,11.10 15.70,13.35 13.25,13.61 11.80,15.60 10.35,13.61 7.90,13.35 8.90,11.10 7.90,8.85 10.35,8.59" fill="none" stroke="#2176b5" stroke-width="1.1" stroke-linecap="round" stroke-linejoin="round" /><circle cx="11.8" cy="11.1" r="1" fill="#2176b5"/></svg>
<span class="t" style="left:208.3px;top:612.6px;font-size:13px;transform:scaleX(0.9796);transform-origin:0 50%;color:#2176b5;letter-spacing:-0.081px;">Evidovat předběžnou nabídku</span>
<div class="a" style="left:381px;top:614px;width:1px;height:18px;background:#1c73b2"></div>
<div class="a" style="left:382px;top:602px;width:130px;height:40px;box-sizing:border-box;border:1px solid #e3212f;background:#fff"></div>
<div class="a" style="left:384px;top:609px;width:126px;height:27.5px;background:#4caf50;border-radius:5px"></div>
<div class="gl" style="left:386px;top:611px;width:122px;height:23px"><div class="gi" style="left:-386px;top:-611px">
<svg style="left:391.6px;top:614.9px" width="16" height="16" viewBox="0 0 16 16"><path d="M4.2,2.8 H1.9 Q0.7,2.8 0.7,4 V14.5 Q0.7,15.7 1.9,15.7 H6.8" fill="none" stroke="rgba(255,255,255,.88)" stroke-width="1.1" stroke-linecap="round" stroke-linejoin="round" /><path d="M9.2,2.8 H11.5 Q12.7,2.8 12.7,4 V5.7" fill="none" stroke="rgba(255,255,255,.88)" stroke-width="1.1" stroke-linecap="round" stroke-linejoin="round" /><path d="M4.2,3.7 V2.6 Q4.2,0.5 6.7,0.5 Q9.2,0.5 9.2,2.6 V3.7" fill="none" stroke="rgba(255,255,255,.88)" stroke-width="1.1" stroke-linecap="round" stroke-linejoin="round" /><circle cx="6.7" cy="2.8" r="0.55" fill="rgba(255,255,255,.88)"/><path d="M3.4,7.1 H6.9" fill="none" stroke="rgba(255,255,255,.88)" stroke-width="1.1" stroke-linecap="round" stroke-linejoin="round" /><path d="M3.4,9.6 H6" fill="none" stroke="rgba(255,255,255,.88)" stroke-width="1.1" stroke-linecap="round" stroke-linejoin="round" /><path d="M3.4,12.1 H5.4" fill="none" stroke="rgba(255,255,255,.88)" stroke-width="1.1" stroke-linecap="round" stroke-linejoin="round" /><circle cx="11.8" cy="11.4" r="3.9" fill="none" stroke="rgba(255,255,255,.88)" stroke-width="1.1" stroke-linecap="round" stroke-linejoin="round" /><path d="M9.7,11.4 H13.6" fill="none" stroke="rgba(255,255,255,.88)" stroke-width="1" stroke-linecap="round" stroke-linejoin="round" /><path d="M12.3,9.9 L13.8,11.4 L12.3,12.9" fill="none" stroke="rgba(255,255,255,.88)" stroke-width="1" stroke-linecap="round" stroke-linejoin="round" /></svg>
<span class="t" style="left:410.41px;top:612.6px;font-size:12.5px;-webkit-text-stroke:.4px;color:rgba(255,255,255,.93);letter-spacing:-0.086px;">Ukončit otevírání</span>
</div></div>
<svg style="left:520.2px;top:614.9px" width="16" height="16" viewBox="0 0 16 16"><path d="M4.2,2.8 H1.9 Q0.7,2.8 0.7,4 V14.5 Q0.7,15.7 1.9,15.7 H6.8" fill="none" stroke="#2176b5" stroke-width="1.1" stroke-linecap="round" stroke-linejoin="round" /><path d="M9.2,2.8 H11.5 Q12.7,2.8 12.7,4 V5.7" fill="none" stroke="#2176b5" stroke-width="1.1" stroke-linecap="round" stroke-linejoin="round" /><path d="M4.2,3.7 V2.6 Q4.2,0.5 6.7,0.5 Q9.2,0.5 9.2,2.6 V3.7" fill="none" stroke="#2176b5" stroke-width="1.1" stroke-linecap="round" stroke-linejoin="round" /><circle cx="6.7" cy="2.8" r="0.55" fill="#2176b5"/><path d="M3.4,7.1 H6.9" fill="none" stroke="#2176b5" stroke-width="1.1" stroke-linecap="round" stroke-linejoin="round" /><path d="M3.4,9.6 H6" fill="none" stroke="#2176b5" stroke-width="1.1" stroke-linecap="round" stroke-linejoin="round" /><path d="M3.4,12.1 H5.4" fill="none" stroke="#2176b5" stroke-width="1.1" stroke-linecap="round" stroke-linejoin="round" /><circle cx="11.8" cy="11.4" r="3.9" fill="none" stroke="#2176b5" stroke-width="1.1" stroke-linecap="round" stroke-linejoin="round" /><path d="M9.7,11.4 H13.6" fill="none" stroke="#2176b5" stroke-width="1" stroke-linecap="round" stroke-linejoin="round" /><path d="M12.3,9.9 L13.8,11.4 L12.3,12.9" fill="none" stroke="#2176b5" stroke-width="1" stroke-linecap="round" stroke-linejoin="round" /></svg>
<span class="t" style="left:539.6px;top:612.6px;font-size:13px;transform:scaleX(0.9812);transform-origin:0 50%;color:#2176b5;letter-spacing:-0.081px;">Stáhnout předběžné nabídky</span>
<div class="a" style="left:707px;top:614px;width:1px;height:18px;background:#1c73b2"></div>
<svg style="left:716.2px;top:614.8px" width="16" height="16" viewBox="0 0 16 16"><path d="M3.4,4.3 V1.2 Q3.4,0.6 4,0.6 H12 Q12.6,0.6 12.6,1.2 V4.3" fill="none" stroke="#2176b5" stroke-width="1.1" stroke-linecap="round" stroke-linejoin="round" /><path d="M3.4,11.6 H1.8 Q0.6,11.6 0.6,10.4 V5.5 Q0.6,4.3 1.8,4.3 H14.2 Q15.4,4.3 15.4,5.5 V10.4 Q15.4,11.6 14.2,11.6 H12.6" fill="none" stroke="#2176b5" stroke-width="1.1" stroke-linecap="round" stroke-linejoin="round" /><rect x="3.4" y="8.6" width="9.2" height="6.9" rx="0.5" fill="none" stroke="#2176b5" stroke-width="1.1" stroke-linecap="round" stroke-linejoin="round" /><path d="M5.4,10.5 H10.4" fill="none" stroke="#2176b5" stroke-width="1" stroke-linecap="round" stroke-linejoin="round" /><path d="M5.4,12.5 H9.2" fill="none" stroke="#2176b5" stroke-width="1" stroke-linecap="round" stroke-linejoin="round" /><circle cx="2.7" cy="6.4" r="0.6" fill="#2176b5"/></svg>
<svg style="left:734.8px;top:618px" width="10" height="10" viewBox="-5 -5 10 10"><path d="M-3.2,-2.7 H3.2 L0,2.7 Z" fill="none" stroke="#2176b5" stroke-width="1" stroke-linecap="round" stroke-linejoin="round" /></svg>
<div class="a" style="left:755px;top:614px;width:1px;height:18px;background:#1c73b2"></div>
<svg style="left:765.4px;top:614.8px" width="14" height="16" viewBox="0 0 14 16"><path d="M4.4,5.7 H2.4 Q1.4,5.7 1.4,6.7 V14.5 Q1.4,15.5 2.4,15.5 H12.4 Q13.4,15.5 13.4,14.5 V6.7 Q13.4,5.7 12.4,5.7 H10.4" fill="none" stroke="#2176b5" stroke-width="1.1" stroke-linecap="round" stroke-linejoin="round" /><path d="M7.4,8 V1" fill="none" stroke="#2176b5" stroke-width="1.1" stroke-linecap="round" stroke-linejoin="round" /><path d="M5.3,3 L7.4,0.8 L9.5,3" fill="none" stroke="#2176b5" stroke-width="1.1" stroke-linecap="round" stroke-linejoin="round" /></svg>
<svg style="left:782.8px;top:618px" width="10" height="10" viewBox="-5 -5 10 10"><path d="M-3.2,-2.7 H3.2 L0,2.7 Z" fill="none" stroke="#2176b5" stroke-width="1" stroke-linecap="round" stroke-linejoin="round" /></svg>
<div class="a" style="left:803px;top:614px;width:1px;height:18px;background:#1c73b2"></div>
<svg style="left:1322px;top:615px" width="16" height="16" viewBox="0 0 16 16"><path d="M1.3,0.8 H14.7 Q15.6,0.8 15.5,1.7 Q14.6,6.6 9.8,8.1 V13.4 L6.4,15.2 V8.1 Q1.4,6.6 0.5,1.7 Q0.4,0.8 1.3,0.8 Z" fill="none" stroke="#2176b5" stroke-width="1.1" stroke-linecap="round" stroke-linejoin="round" /></svg>
<div class="a" style="left:1345px;top:614px;width:1px;height:18px;background:#1c73b2"></div>
<svg style="left:1356.7px;top:618.1px" width="10" height="10" viewBox="-5 -5 10 10"><path d="M-3.2,-2.7 H3.2 L0,2.7 Z" fill="none" stroke="#2176b5" stroke-width="1" stroke-linecap="round" stroke-linejoin="round" /></svg>
<span class="t" style="left:1373.38px;top:615.3px;font-size:13px;color:#2176b5;letter-spacing:-0.018px;">Vše</span>
<div class="a" style="left:1402px;top:614px;width:1px;height:18px;background:#1c73b2"></div>
<div class="a" style="left:181px;top:642px;width:1222px;height:34px;box-sizing:border-box;background:#f3f3f3;border-top:1px solid #dfdfdf;border-bottom:1px solid #d6d6d6"></div>
<div class="a" style="left:246px;top:643px;width:1px;height:32px;background:#dadada"></div>
<div class="a" style="left:326px;top:643px;width:1px;height:32px;background:#dadada"></div>
<div class="a" style="left:529px;top:643px;width:1px;height:32px;background:#dadada"></div>
<div class="a" style="left:629px;top:643px;width:1px;height:32px;background:#dadada"></div>
<div class="a" style="left:769px;top:643px;width:1px;height:32px;background:#dadada"></div>
<div class="a" style="left:949px;top:643px;width:1px;height:32px;background:#dadada"></div>
<div class="a" style="left:1079px;top:643px;width:1px;height:32px;background:#dadada"></div>
<div class="a" style="left:1209px;top:643px;width:1px;height:32px;background:#dadada"></div>
<svg style="left:205.8px;top:651.2px" width="16.4" height="15.8" viewBox="0 0 16.4 15.8"><rect x="0.5" y="0.5" width="15.4" height="14.8" rx="0.9" fill="none" stroke="#555" stroke-width="1" stroke-linecap="round" stroke-linejoin="round" /><path d="M3.2,5.3 H9.4" fill="none" stroke="#555" stroke-width="1" stroke-linecap="round" stroke-linejoin="round" /><path d="M3.2,10.5 H4.5" fill="none" stroke="#555" stroke-width="1" stroke-linecap="round" stroke-linejoin="round" /><path d="M7.9,10.5 H13.2" fill="none" stroke="#555" stroke-width="1" stroke-linecap="round" stroke-linejoin="round" /><circle cx="11" cy="5.3" r="1.55" fill="none" stroke="#555" stroke-width="1" stroke-linecap="round" stroke-linejoin="round" /><circle cx="6.3" cy="10.5" r="1.55" fill="none" stroke="#555" stroke-width="1" stroke-linecap="round" stroke-linejoin="round" /></svg>
<span class="t" style="left:254.63px;top:649.8px;font-size:13px;font-weight:700;transform:scaleX(0.9331);transform-origin:0 50%;letter-spacing:-0.101px;">Číslo</span>
<svg style="left:289.8px;top:653.2px" width="12" height="12" viewBox="0 0 12 12"><path d="M6,11.2 V0.9" fill="none" stroke="#000" stroke-width="1.05" stroke-linecap="round" stroke-linejoin="round" /><path d="M0.9,5.7 L6,0.7 L11.1,5.7" fill="none" stroke="#000" stroke-width="1.05" stroke-linecap="round" stroke-linejoin="round" /></svg>
<div class="gl" style="left:327px;top:643px;width:1076px;height:32px"><div class="gi" style="left:-327px;top:-643px">
<svg style="left:307.8px;top:654.6px" width="10" height="10" viewBox="-5 -5 10 10"><path d="M-3.2,-2.7 H3.2 L0,2.7 Z" fill="none" stroke="#555" stroke-width="1" stroke-linecap="round" stroke-linejoin="round" /></svg>
<span class="t" style="left:334.8px;top:649.8px;font-size:13px;transform:scaleX(0.9805);transform-origin:0 50%;color:#6a6a6a;letter-spacing:-0.082px;">Název dodavatele</span>
<svg style="left:511px;top:654.6px" width="10" height="10" viewBox="-5 -5 10 10"><path d="M-3.2,-2.7 H3.2 L0,2.7 Z" fill="none" stroke="#555" stroke-width="1" stroke-linecap="round" stroke-linejoin="round" /></svg>
<span class="t" style="left:537.74px;top:649.8px;font-size:13px;transform:scaleX(0.9175);transform-origin:0 50%;color:#6a6a6a;letter-spacing:-0.133px;">IČO</span>
<svg style="left:611px;top:654.6px" width="10" height="10" viewBox="-5 -5 10 10"><path d="M-3.2,-2.7 H3.2 L0,2.7 Z" fill="none" stroke="#555" stroke-width="1" stroke-linecap="round" stroke-linejoin="round" /></svg>
<span class="t" style="left:637.78px;top:649.8px;font-size:13px;color:#6a6a6a;letter-spacing:-0.082px;">Datum podání</span>
<svg style="left:751px;top:654.6px" width="10" height="10" viewBox="-5 -5 10 10"><path d="M-3.2,-2.7 H3.2 L0,2.7 Z" fill="none" stroke="#555" stroke-width="1" stroke-linecap="round" stroke-linejoin="round" /></svg>
<span class="t" style="left:777.49px;top:649.8px;font-size:13px;color:#6a6a6a;letter-spacing:-0.149px;">Stav</span>
<svg style="left:931px;top:654.6px" width="10" height="10" viewBox="-5 -5 10 10"><path d="M-3.2,-2.7 H3.2 L0,2.7 Z" fill="none" stroke="#555" stroke-width="1" stroke-linecap="round" stroke-linejoin="round" /></svg>
<span class="t" style="left:957.58px;top:649.8px;font-size:13px;color:#6a6a6a;letter-spacing:-0.174px;">Podaná po lhůtě</span>
<svg style="left:1061px;top:654.6px" width="10" height="10" viewBox="-5 -5 10 10"><path d="M-3.2,-2.7 H3.2 L0,2.7 Z" fill="none" stroke="#555" stroke-width="1" stroke-linecap="round" stroke-linejoin="round" /></svg>
<span class="t" style="left:1087.69px;top:649.8px;font-size:13px;color:#6a6a6a;letter-spacing:-0.074px;">Listinná podoba</span>
<svg style="left:1191px;top:654.6px" width="10" height="10" viewBox="-5 -5 10 10"><path d="M-3.2,-2.7 H3.2 L0,2.7 Z" fill="none" stroke="#555" stroke-width="1" stroke-linecap="round" stroke-linejoin="round" /></svg>
<span class="t" style="left:1217.6px;top:649.8px;font-size:13px;transform:scaleX(0.9759);transform-origin:0 50%;color:#6a6a6a;letter-spacing:-0.082px;">Označena jako nepodaná</span>
<svg style="left:1384px;top:654.6px" width="10" height="10" viewBox="-5 -5 10 10"><path d="M-3.2,-2.7 H3.2 L0,2.7 Z" fill="none" stroke="#555" stroke-width="1" stroke-linecap="round" stroke-linejoin="round" /></svg>
</div></div>
<div class="gl" style="left:181px;top:676px;width:1222px;height:150px"><div class="gi" style="left:-181px;top:-676px">
<div class="a" style="left:181px;top:700px;width:1222px;height:1px;background:#dfdfdf"></div>
<svg style="left:192.1px;top:685px" width="18" height="6" viewBox="-9 -3 18 6"><circle cx="-5.8" cy="0" r="1.7" fill="none" stroke="#1c73b2" stroke-width="1.05" stroke-linecap="round" stroke-linejoin="round" /><circle cx="0" cy="0" r="1.7" fill="none" stroke="#1c73b2" stroke-width="1.05" stroke-linecap="round" stroke-linejoin="round" /><circle cx="5.8" cy="0" r="1.7" fill="none" stroke="#1c73b2" stroke-width="1.05" stroke-linecap="round" stroke-linejoin="round" /></svg>
<svg style="left:218px;top:679px" width="18" height="18" viewBox="-9 -9 18 18"><circle cx="0" cy="0" r="7.6" fill="none" stroke="#1c73b2" stroke-width="1.05" stroke-linecap="round" stroke-linejoin="round" /><circle cx="-0.3" cy="-3.5" r="0.8" fill="#1c73b2"/><path d="M-0.9,-1.3 H0 V2.6 Q0,3.3 1,3.3" fill="none" stroke="#1c73b2" stroke-width="1.1" stroke-linecap="round" stroke-linejoin="round" /></svg>
<span class="t" style="left:254.59px;top:678.5px;font-size:13px;color:#1b1b1b;letter-spacing:-0.067px;">001</span>
<span class="t" style="left:334.89px;top:678.5px;font-size:13px;color:#1b1b1b;letter-spacing:-0.113px;">Dodavatel - školení 2</span>
<span class="t" style="left:537.68px;top:678.5px;font-size:13px;color:#1b1b1b;letter-spacing:0.104px;">12345678</span>
<span class="t" style="left:637.78px;top:678.5px;font-size:13px;color:#1b1b1b;letter-spacing:-0.081px;">5. 6. 2025 12:36</span>
<span class="t" style="left:777.5px;top:678.5px;font-size:13px;transform:scaleX(0.982);transform-origin:0 50%;color:#1b1b1b;letter-spacing:-0.083px;">Otevřena</span>
<svg style="left:1010.5px;top:682px" width="10" height="10" viewBox="-5 -5 10 10"><line x1="-3" y1="-3" x2="3" y2="3" stroke="#c8272b" stroke-width="2" stroke-linecap="round"/><line x1="3" y1="-3" x2="-3" y2="3" stroke="#c8272b" stroke-width="2" stroke-linecap="round"/></svg>
<svg style="left:1140.3px;top:682px" width="10" height="10" viewBox="-5 -5 10 10"><line x1="-3" y1="-3" x2="3" y2="3" stroke="#c8272b" stroke-width="2" stroke-linecap="round"/><line x1="3" y1="-3" x2="-3" y2="3" stroke="#c8272b" stroke-width="2" stroke-linecap="round"/></svg>
<svg style="left:1302px;top:682px" width="10" height="10" viewBox="-5 -5 10 10"><line x1="-3" y1="-3" x2="3" y2="3" stroke="#c8272b" stroke-width="2" stroke-linecap="round"/><line x1="3" y1="-3" x2="-3" y2="3" stroke="#c8272b" stroke-width="2" stroke-linecap="round"/></svg>
<div class="a" style="left:181px;top:725px;width:1222px;height:1px;background:#dfdfdf"></div>
<svg style="left:192.1px;top:710px" width="18" height="6" viewBox="-9 -3 18 6"><circle cx="-5.8" cy="0" r="1.7" fill="none" stroke="#1c73b2" stroke-width="1.05" stroke-linecap="round" stroke-linejoin="round" /><circle cx="0" cy="0" r="1.7" fill="none" stroke="#1c73b2" stroke-width="1.05" stroke-linecap="round" stroke-linejoin="round" /><circle cx="5.8" cy="0" r="1.7" fill="none" stroke="#1c73b2" stroke-width="1.05" stroke-linecap="round" stroke-linejoin="round" /></svg>
<svg style="left:218px;top:704px" width="18" height="18" viewBox="-9 -9 18 18"><circle cx="0" cy="0" r="7.6" fill="none" stroke="#1c73b2" stroke-width="1.05" stroke-linecap="round" stroke-linejoin="round" /><circle cx="-0.3" cy="-3.5" r="0.8" fill="#1c73b2"/><path d="M-0.9,-1.3 H0 V2.6 Q0,3.3 1,3.3" fill="none" stroke="#1c73b2" stroke-width="1.1" stroke-linecap="round" stroke-linejoin="round" /></svg>
<span class="t" style="left:254.59px;top:703.5px;font-size:13px;color:#1b1b1b;letter-spacing:-0.067px;">002</span>
<span class="t" style="left:334.89px;top:703.5px;font-size:13px;color:#1b1b1b;letter-spacing:-0.113px;">Dodavatel - školení 3</span>
<span class="t" style="left:537.68px;top:703.5px;font-size:13px;color:#1b1b1b;letter-spacing:0.104px;">12345678</span>
<span class="t" style="left:637.78px;top:703.5px;font-size:13px;color:#1b1b1b;letter-spacing:-0.081px;">5. 6. 2025 12:37</span>
<span class="t" style="left:777.5px;top:703.5px;font-size:13px;transform:scaleX(0.982);transform-origin:0 50%;color:#1b1b1b;letter-spacing:-0.083px;">Otevřena</span>
<svg style="left:1010.5px;top:707px" width="10" height="10" viewBox="-5 -5 10 10"><line x1="-3" y1="-3" x2="3" y2="3" stroke="#c8272b" stroke-width="2" stroke-linecap="round"/><line x1="3" y1="-3" x2="-3" y2="3" stroke="#c8272b" stroke-width="2" stroke-linecap="round"/></svg>
<svg style="left:1140.3px;top:707px" width="10" height="10" viewBox="-5 -5 10 10"><line x1="-3" y1="-3" x2="3" y2="3" stroke="#c8272b" stroke-width="2" stroke-linecap="round"/><line x1="3" y1="-3" x2="-3" y2="3" stroke="#c8272b" stroke-width="2" stroke-linecap="round"/></svg>
<svg style="left:1302px;top:707px" width="10" height="10" viewBox="-5 -5 10 10"><line x1="-3" y1="-3" x2="3" y2="3" stroke="#c8272b" stroke-width="2" stroke-linecap="round"/><line x1="3" y1="-3" x2="-3" y2="3" stroke="#c8272b" stroke-width="2" stroke-linecap="round"/></svg>
<div class="a" style="left:181px;top:750px;width:1222px;height:1px;background:#dfdfdf"></div>
<svg style="left:192.1px;top:735px" width="18" height="6" viewBox="-9 -3 18 6"><circle cx="-5.8" cy="0" r="1.7" fill="none" stroke="#1c73b2" stroke-width="1.05" stroke-linecap="round" stroke-linejoin="round" /><circle cx="0" cy="0" r="1.7" fill="none" stroke="#1c73b2" stroke-width="1.05" stroke-linecap="round" stroke-linejoin="round" /><circle cx="5.8" cy="0" r="1.7" fill="none" stroke="#1c73b2" stroke-width="1.05" stroke-linecap="round" stroke-linejoin="round" /></svg>
<svg style="left:218px;top:729px" width="18" height="18" viewBox="-9 -9 18 18"><circle cx="0" cy="0" r="7.6" fill="none" stroke="#1c73b2" stroke-width="1.05" stroke-linecap="round" stroke-linejoin="round" /><circle cx="-0.3" cy="-3.5" r="0.8" fill="#1c73b2"/><path d="M-0.9,-1.3 H0 V2.6 Q0,3.3 1,3.3" fill="none" stroke="#1c73b2" stroke-width="1.1" stroke-linecap="round" stroke-linejoin="round" /></svg>
<span class="t" style="left:254.59px;top:728.5px;font-size:13px;color:#1b1b1b;letter-spacing:-0.067px;">003</span>
<span class="t" style="left:334.89px;top:728.5px;font-size:13px;color:#1b1b1b;letter-spacing:-0.113px;">Dodavatel - školení 5</span>
<span class="t" style="left:537.68px;top:728.5px;font-size:13px;color:#1b1b1b;letter-spacing:0.104px;">12345678</span>
<span class="t" style="left:637.78px;top:728.5px;font-size:13px;color:#1b1b1b;letter-spacing:-0.081px;">5. 6. 2025 12:38</span>
<span class="t" style="left:777.5px;top:728.5px;font-size:13px;transform:scaleX(0.982);transform-origin:0 50%;color:#1b1b1b;letter-spacing:-0.083px;">Otevřena</span>
<svg style="left:1010.5px;top:732px" width="10" height="10" viewBox="-5 -5 10 10"><line x1="-3" y1="-3" x2="3" y2="3" stroke="#c8272b" stroke-width="2" stroke-linecap="round"/><line x1="3" y1="-3" x2="-3" y2="3" stroke="#c8272b" stroke-width="2" stroke-linecap="round"/></svg>
<svg style="left:1140.3px;top:732px" width="10" height="10" viewBox="-5 -5 10 10"><line x1="-3" y1="-3" x2="3" y2="3" stroke="#c8272b" stroke-width="2" stroke-linecap="round"/><line x1="3" y1="-3" x2="-3" y2="3" stroke="#c8272b" stroke-width="2" stroke-linecap="round"/></svg>
<svg style="left:1302px;top:732px" width="10" height="10" viewBox="-5 -5 10 10"><line x1="-3" y1="-3" x2="3" y2="3" stroke="#c8272b" stroke-width="2" stroke-linecap="round"/><line x1="3" y1="-3" x2="-3" y2="3" stroke="#c8272b" stroke-width="2" stroke-linecap="round"/></svg>
<div class="a" style="left:181px;top:775px;width:1222px;height:1px;background:#dfdfdf"></div>
<svg style="left:192.1px;top:760px" width="18" height="6" viewBox="-9 -3 18 6"><circle cx="-5.8" cy="0" r="1.7" fill="none" stroke="#1c73b2" stroke-width="1.05" stroke-linecap="round" stroke-linejoin="round" /><circle cx="0" cy="0" r="1.7" fill="none" stroke="#1c73b2" stroke-width="1.05" stroke-linecap="round" stroke-linejoin="round" /><circle cx="5.8" cy="0" r="1.7" fill="none" stroke="#1c73b2" stroke-width="1.05" stroke-linecap="round" stroke-linejoin="round" /></svg>
<svg style="left:218px;top:754px" width="18" height="18" viewBox="-9 -9 18 18"><circle cx="0" cy="0" r="7.6" fill="none" stroke="#1c73b2" stroke-width="1.05" stroke-linecap="round" stroke-linejoin="round" /><circle cx="-0.3" cy="-3.5" r="0.8" fill="#1c73b2"/><path d="M-0.9,-1.3 H0 V2.6 Q0,3.3 1,3.3" fill="none" stroke="#1c73b2" stroke-width="1.1" stroke-linecap="round" stroke-linejoin="round" /></svg>
<span class="t" style="left:254.59px;top:753.5px;font-size:13px;color:#1b1b1b;letter-spacing:-0.067px;">004</span>
<span class="t" style="left:334.89px;top:753.5px;font-size:13px;color:#1b1b1b;letter-spacing:-0.113px;">Dodavatel - školení 6</span>
<span class="t" style="left:537.68px;top:753.5px;font-size:13px;color:#1b1b1b;letter-spacing:0.104px;">45359326</span>
<span class="t" style="left:637.78px;top:753.5px;font-size:13px;color:#1b1b1b;letter-spacing:-0.081px;">5. 6. 2025 12:39</span>
<span class="t" style="left:777.5px;top:753.5px;font-size:13px;transform:scaleX(0.982);transform-origin:0 50%;color:#1b1b1b;letter-spacing:-0.083px;">Otevřena</span>
<svg style="left:1010.5px;top:757px" width="10" height="10" viewBox="-5 -5 10 10"><line x1="-3" y1="-3" x2="3" y2="3" stroke="#c8272b" stroke-width="2" stroke-linecap="round"/><line x1="3" y1="-3" x2="-3" y2="3" stroke="#c8272b" stroke-width="2" stroke-linecap="round"/></svg>
<svg style="left:1140.3px;top:757px" width="10" height="10" viewBox="-5 -5 10 10"><line x1="-3" y1="-3" x2="3" y2="3" stroke="#c8272b" stroke-width="2" stroke-linecap="round"/><line x1="3" y1="-3" x2="-3" y2="3" stroke="#c8272b" stroke-width="2" stroke-linecap="round"/></svg>
<svg style="left:1301px;top:756px" width="12" height="12" viewBox="-6 -6 12 12"><path d="M-4.2,0.0 L-1.0,3.0 L4.7,-3.3" fill="none" stroke="#2db52d" stroke-width="2.1" stroke-linecap="round" stroke-linejoin="round" /></svg>
<div class="a" style="left:181px;top:800px;width:1222px;height:1px;background:#dfdfdf"></div>
<svg style="left:192.1px;top:785px" width="18" height="6" viewBox="-9 -3 18 6"><circle cx="-5.8" cy="0" r="1.7" fill="none" stroke="#1c73b2" stroke-width="1.05" stroke-linecap="round" stroke-linejoin="round" /><circle cx="0" cy="0" r="1.7" fill="none" stroke="#1c73b2" stroke-width="1.05" stroke-linecap="round" stroke-linejoin="round" /><circle cx="5.8" cy="0" r="1.7" fill="none" stroke="#1c73b2" stroke-width="1.05" stroke-linecap="round" stroke-linejoin="round" /></svg>
<svg style="left:218px;top:779px" width="18" height="18" viewBox="-9 -9 18 18"><circle cx="0" cy="0" r="7.6" fill="none" stroke="#1c73b2" stroke-width="1.05" stroke-linecap="round" stroke-linejoin="round" /><circle cx="-0.3" cy="-3.5" r="0.8" fill="#1c73b2"/><path d="M-0.9,-1.3 H0 V2.6 Q0,3.3 1,3.3" fill="none" stroke="#1c73b2" stroke-width="1.1" stroke-linecap="round" stroke-linejoin="round" /></svg>
<span class="t" style="left:254.59px;top:778.5px;font-size:13px;color:#1b1b1b;letter-spacing:-0.067px;">005</span>
<span class="t" style="left:334.89px;top:778.5px;font-size:13px;color:#1b1b1b;letter-spacing:-0.113px;">Dodavatel - školení 7</span>
<span class="t" style="left:537.68px;top:778.5px;font-size:13px;color:#1b1b1b;letter-spacing:0.104px;">12345678</span>
<span class="t" style="left:637.78px;top:778.5px;font-size:13px;color:#1b1b1b;letter-spacing:-0.081px;">5. 6. 2025 12:40</span>
<span class="t" style="left:777.5px;top:778.5px;font-size:13px;transform:scaleX(0.982);transform-origin:0 50%;color:#1b1b1b;letter-spacing:-0.083px;">Otevřena</span>
<svg style="left:1010.5px;top:782px" width="10" height="10" viewBox="-5 -5 10 10"><line x1="-3" y1="-3" x2="3" y2="3" stroke="#c8272b" stroke-width="2" stroke-linecap="round"/><line x1="3" y1="-3" x2="-3" y2="3" stroke="#c8272b" stroke-width="2" stroke-linecap="round"/></svg>
<svg style="left:1140.3px;top:782px" width="10" height="10" viewBox="-5 -5 10 10"><line x1="-3" y1="-3" x2="3" y2="3" stroke="#c8272b" stroke-width="2" stroke-linecap="round"/><line x1="3" y1="-3" x2="-3" y2="3" stroke="#c8272b" stroke-width="2" stroke-linecap="round"/></svg>
<svg style="left:1302px;top:782px" width="10" height="10" viewBox="-5 -5 10 10"><line x1="-3" y1="-3" x2="3" y2="3" stroke="#c8272b" stroke-width="2" stroke-linecap="round"/><line x1="3" y1="-3" x2="-3" y2="3" stroke="#c8272b" stroke-width="2" stroke-linecap="round"/></svg>
<svg style="left:192.1px;top:810px" width="18" height="6" viewBox="-9 -3 18 6"><circle cx="-5.8" cy="0" r="1.7" fill="none" stroke="#1c73b2" stroke-width="1.05" stroke-linecap="round" stroke-linejoin="round" /><circle cx="0" cy="0" r="1.7" fill="none" stroke="#1c73b2" stroke-width="1.05" stroke-linecap="round" stroke-linejoin="round" /><circle cx="5.8" cy="0" r="1.7" fill="none" stroke="#1c73b2" stroke-width="1.05" stroke-linecap="round" stroke-linejoin="round" /></svg>
<svg style="left:218px;top:804px" width="18" height="18" viewBox="-9 -9 18 18"><circle cx="0" cy="0" r="7.6" fill="none" stroke="#1c73b2" stroke-width="1.05" stroke-linecap="round" stroke-linejoin="round" /><circle cx="-0.3" cy="-3.5" r="0.8" fill="#1c73b2"/><path d="M-0.9,-1.3 H0 V2.6 Q0,3.3 1,3.3" fill="none" stroke="#1c73b2" stroke-width="1.1" stroke-linecap="round" stroke-linejoin="round" /></svg>
<span class="t" style="left:254.59px;top:803.5px;font-size:13px;color:#1b1b1b;letter-spacing:-0.067px;">006</span>
<span class="t" style="left:334.89px;top:803.5px;font-size:13px;color:#1b1b1b;letter-spacing:-0.113px;">Dodavatel - školení 7</span>
<span class="t" style="left:537.68px;top:803.5px;font-size:13px;color:#1b1b1b;letter-spacing:0.104px;">12345678</span>
<span class="t" style="left:637.78px;top:803.5px;font-size:13px;color:#1b1b1b;letter-spacing:-0.081px;">5. 6. 2025 13:03</span>
<span class="t" style="left:777.49px;top:803.5px;font-size:13px;color:#1b1b1b;letter-spacing:-0.132px;">Otevření zaevidováno</span>
<svg style="left:1010.5px;top:807px" width="10" height="10" viewBox="-5 -5 10 10"><line x1="-3" y1="-3" x2="3" y2="3" stroke="#c8272b" stroke-width="2" stroke-linecap="round"/><line x1="3" y1="-3" x2="-3" y2="3" stroke="#c8272b" stroke-width="2" stroke-linecap="round"/></svg>
<svg style="left:1139.3px;top:806px" width="12" height="12" viewBox="-6 -6 12 12"><path d="M-4.2,0.0 L-1.0,3.0 L4.7,-3.3" fill="none" stroke="#2db52d" stroke-width="2.1" stroke-linecap="round" stroke-linejoin="round" /></svg>
<svg style="left:1302px;top:807px" width="10" height="10" viewBox="-5 -5 10 10"><line x1="-3" y1="-3" x2="3" y2="3" stroke="#c8272b" stroke-width="2" stroke-linecap="round"/><line x1="3" y1="-3" x2="-3" y2="3" stroke="#c8272b" stroke-width="2" stroke-linecap="round"/></svg>
</div></div>
</body>
</html>
